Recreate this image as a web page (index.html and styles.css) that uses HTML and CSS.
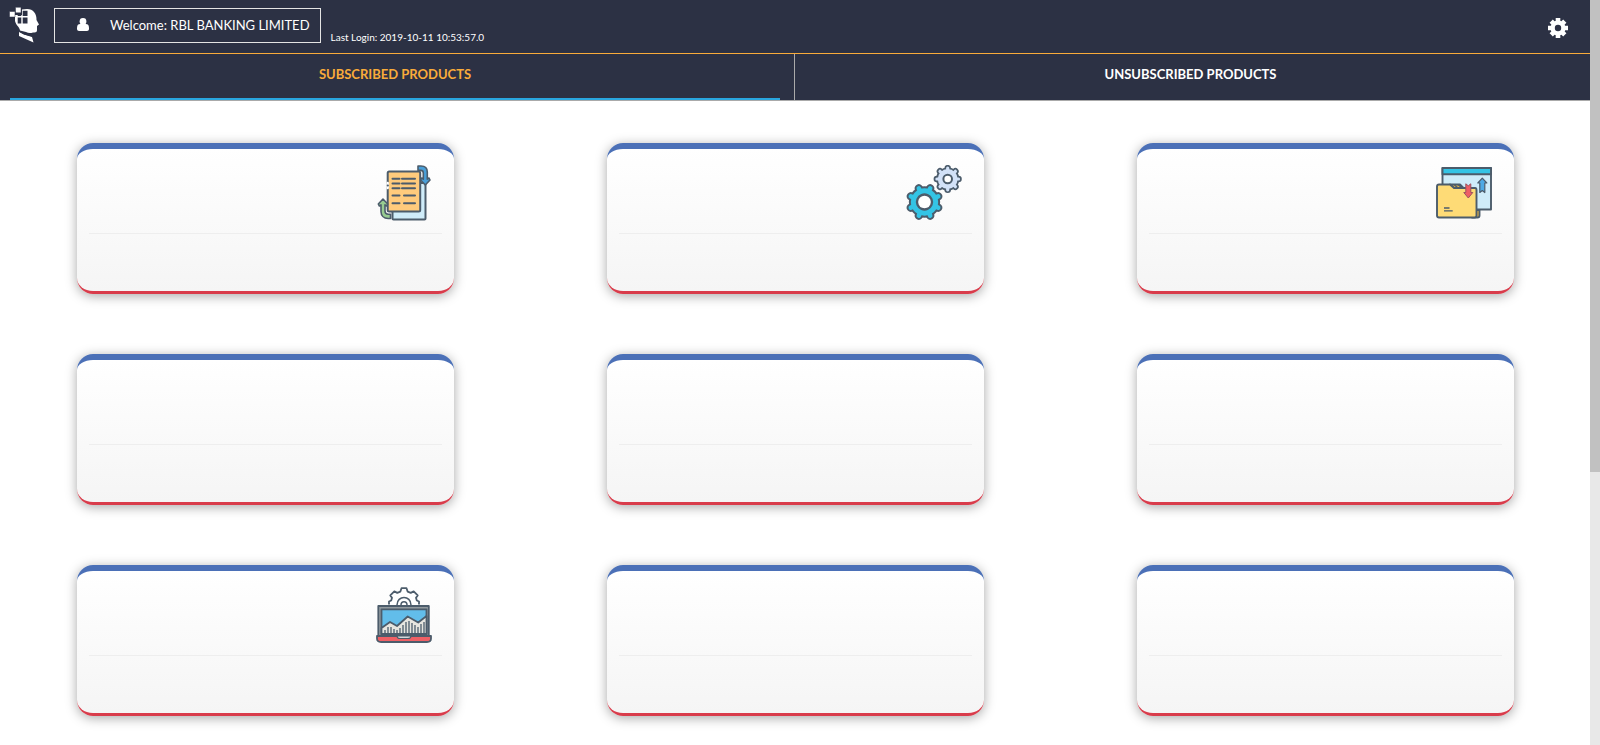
FILE: index.html
```html
<!DOCTYPE html>
<html lang="en">
<head>
<meta charset="utf-8">
<title>Subscribed Products</title>
<link rel="stylesheet" href="styles.css">
</head>
<body>
<div class="shell">
  <div class="page">
    <header class="topbar">
      <a class="logo" href="#" aria-label="Home">
        <svg width="30" height="36" viewBox="0 0 30 36" fill="#fff">
          <path d="M13 2.500c5-1 10-1 12 2.500 2 2 2.500 5 2.500 8l2.500 4.500-2 1.500v4c0 2.500-2 2.500-4 2.500-3 1-5 .500-7-.5l-6-1.500c0-3-4-5-5-9.500V8h7z"/>
          <path d="M10 24.500l5 3 8 2.500 1.500 5.500L10 29z"/>
          <path d="M8.700 6h3.600v3H8.700zM13.700 3.700h4.800V9h-4.800zM8.700 10.500h3.600v6H8.700zM13.700 10.500h4.800v6h-4.800z" fill="#2c3144"/>
          <path d="M.5 4.500h5.500v5.500H.5zM6.500.3h5.500v5.500H6.500z" stroke="#2c3144" stroke-width=".5"/>
          <path d="M10 24.500l5 2.500 8 2" fill="none" stroke="#2c3144" stroke-width="1"/>
        </svg>
      </a>
      <button class="welcome" type="button">
        <svg width="12" height="13" viewBox="0 0 12 13" fill="#fff"><path d="M3 6C0 6 0 9 0 11c0 1 1 2 2 2h8c1 0 2-1 2-2 0-2 0-5-3-5z"/><circle cx="6" cy="3.500" r="3.400"/></svg>
        <span>Welcome: RBL BANKING LIMITED</span>
      </button>
      <span class="last-login">Last Login: 2019-10-11 10:53:57.0</span>
      <button class="settings" type="button" aria-label="Settings">
        <svg width="20" height="20" viewBox="-10 -10 20 20">
          <g stroke="#fff" stroke-width="4.600"><path d="M0-10V10M-10 0H10M-6.800-6.800L6.800 6.800M6.800-6.800L-6.800 6.800"/></g>
          <circle r="7.500" fill="#fff"/><circle r="3.200" fill="#2c3144"/>
        </svg>
      </button>
    </header>
    <nav class="tabs">
      <a class="tab tab-active" href="#subscribed"><span>SUBSCRIBED PRODUCTS</span></a>
      <a class="tab" href="#unsubscribed"><span>UNSUBSCRIBED PRODUCTS</span></a>
    </nav>
    <main class="products">
      <section class="card"><div class="card-head">
        <svg class="icon" viewBox="0 0 56 56" fill="none" stroke="#4c5c6b" stroke-width="2" stroke-linejoin="round" stroke-linecap="round">
          <rect x="16.500" y="18" width="33" height="36.500" rx="1" fill="#cfecf9"/>
          <rect x="11.700" y="6.500" width="32.500" height="40" rx="1.500" fill="#ffcb7c"/>
          <path d="M11.700 18v5" stroke="#fff" stroke-width="2.400"/>
          <path d="M11.700 20.500h.2"/>
          <path d="M16.500 13.700h7M26 13.700h13M16.500 18.500h7M26 18.500h13M16.500 23.300h7M26 23.300h13M16.500 30.600h7M28 30.600h11M16.500 38.300h7M28 38.300h11"/>
          <path d="M42 1h3c4 0 6.300 2.300 6.300 6v7.200l1.700-1.200 1 2-4.700 5-4.700-5 1-2 1.700 1.200V8c0-2-.8-2.600-2.600-2.600H42z" fill="#4a9fd8" stroke-width="1.600"/>
          <path d="M14.500 53.500h-2.300c-4.500 0-7.200-3-7.200-7v-6.700L3.300 41l-1-2L7 34l4.700 5-1 2L9 39.800V46c0 2 1.200 3.200 3.200 3.200h2.300z" fill="#98cc91" stroke-width="1.600"/>
        </svg></div></section>
      <section class="card"><div class="card-head">
        <svg class="icon" viewBox="0 0 56 56">
          <g transform="translate(18.500 37) rotate(22.500)" stroke-linecap="round">
            <g stroke="#4c5c6b" stroke-width="8.400"><path d="M0-14.800V14.800M-14.800 0H14.800M-10.500-10.500L10.500 10.500M10.500-10.500L-10.500 10.500"/></g>
            <circle r="15.600" fill="#4c5c6b"/>
            <g stroke="#34c4e5" stroke-width="4.600"><path d="M0-14.800V14.800M-14.800 0H14.800M-10.500-10.500L10.500 10.500M10.500-10.500L-10.500 10.500"/></g>
            <circle r="13.600" fill="#34c4e5"/>
            <circle r="7.500" fill="#fff" stroke="#4c5c6b" stroke-width="2.400"/>
          </g>
          <g transform="translate(41.700 14)" stroke-linecap="round">
            <g stroke="#4c5c6b" stroke-width="6.600"><path d="M0-10.800V10.800M-10.800 0H10.800M-7.700-7.700L7.700 7.700M7.700-7.700L-7.700 7.700"/></g>
            <circle r="11.600" fill="#4c5c6b"/>
            <g stroke="#d2e1f7" stroke-width="3.200"><path d="M0-10.800V10.800M-10.800 0H10.800M-7.700-7.700L7.700 7.700M7.700-7.700L-7.700 7.700"/></g>
            <circle r="9.900" fill="#d2e1f7"/>
            <circle r="4.300" fill="#fff" stroke="#4c5c6b" stroke-width="2"/>
          </g>
        </svg></div></section>
      <section class="card"><div class="card-head">
        <svg class="icon" viewBox="0 0 56 56" fill="none" stroke="#4c5c6b" stroke-width="1.900" stroke-linejoin="round">
          <rect x="6.500" y="3" width="48.500" height="41.500" fill="#cfecf9"/>
          <path d="M6.500 3H55v6.300H6.500z" fill="#34c4e5"/>
          <path d="M38 45h5.500v5.500q0 2-2 2H36z" fill="#e3b54a"/>
          <path d="M14 19.500h10l3.500 3.500H18z" fill="#e3b54a"/>
          <path d="M3 19.500h11l4 3.500h21q1.500 0 1.500 2v25.500q0 2-2 2H3q-2 0-2-2V21.500q0-2 2-2z" fill="#fedb76"/>
          <path d="M18 19.500l4 3.500M22 19.500l4 3.500" stroke-width="1.400"/>
          <path d="M8 43h5.500M8 45.800h8.700" stroke-width="1.300"/>
          <path d="M29.800 18.800l2.500 2 2.500-2v8.700h2l-4.500 5.500-4.500-5.500h2z" fill="#ef5e65" stroke="#9b5360" stroke-width="1"/>
          <path d="M43.800 27.500l2.500-2 2.500 2V18h2l-4.500-4.800-4.500 4.800h2z" fill="#4da9e4" stroke-width="1.200"/>
        </svg></div></section>
      <section class="card"><div class="card-head"></div></section>
      <section class="card"><div class="card-head"></div></section>
      <section class="card"><div class="card-head"></div></section>
      <section class="card"><div class="card-head">
        <svg class="icon" viewBox="0 0 56 56" fill="none" stroke="#4c5c6b" stroke-width="1.800" stroke-linejoin="round">
          <path d="M13 17.500v-3l2.200-1 .8-2.700-1.700-2.400 4-4 3 1.500 3-1.200L25.500 1.200h5l1.200 3.500 3 1.200 3-1.500 4 4L40 10.800l.8 2.700 2.200 1v3" fill="#fff"/>
          <path d="M21 18c0-10 14-10 14 0M25 18c0-4.500 6-4.500 6 0" stroke-width="1.500"/>
          <rect x="2.300" y="19" width="50.500" height="30" fill="#929a9f"/>
          <rect x="5.500" y="22.300" width="45" height="25" fill="#62bdea"/>
          <path d="M5.500 41L14 35l7 4 10.700-9.500 10.500 6 8.300-6.500v18h-45z" fill="#e6e5df"/>
          <path d="M9 43v4M12 40v7M15 40v7M18 42v5M21 43v4M24 41v6M27 38v9M30 35v12M33 34v13M36 36v11M39 38v9M42 40v7M45 37v10M48 35v12" stroke-width="1.300"/>
          <path d="M1 49h54v2.500q0 3.500-4 3.500H5q-4 0-4-3.500z" fill="#ef6065"/>
          <path d="M21 49h14q0 2.500-3 2.500h-8q-3 0-3-2.500z" fill="#d5d8da" stroke-width="1.200"/>
        </svg></div></section>
      <section class="card"><div class="card-head"></div></section>
      <section class="card"><div class="card-head"></div></section>
    </main>
  </div>
  <div class="scroll-track"><div class="scroll-thumb"></div></div>
</div>
</body>
</html>
```
FILE: styles.css
```css
* { box-sizing: border-box; }
body {
  margin: 0;
  background: #fff;
  font-family: Lato, "Liberation Sans", sans-serif;
  font-size: 13px;
  color: #fff;
}
button { font: inherit; color: inherit; background: none; }
svg { display: block; }
.shell {
  display: grid;
  grid-template-columns: 1fr 10px;
  min-height: 100vh;
}
.topbar {
  display: flex;
  align-items: flex-start;
  height: 54px;
  padding: 7px 22px 0 9px;
  background: #2c3144;
  border-bottom: 1px solid #f9ab3a;
}
.logo { margin-right: 15px; }
.welcome {
  display: flex;
  align-items: center;
  gap: 21px;
  height: 35px;
  margin-top: 1px;
  padding: 0 10px 2px 22px;
  border: 1px solid #e4e4e4;
}
.last-login {
  margin: 22px 0 0 10px;
  font-size: 10px;
  line-height: 16px;
}
.settings {
  margin: 11px 0 0 auto;
  padding: 0;
  border: 0;
}
.tabs {
  display: grid;
  grid-template-columns: 1fr 1fr;
  height: 47px;
  background: #2c3144;
  border-bottom: 1px solid #aaa;
}
.tab {
  display: flex;
  padding: 0 14px 0 10px;
  color: #fff;
  font-weight: 700;
  line-height: 40px;
  text-align: center;
  text-decoration: none;
}
.tab span { flex: 1; }
.tab-active {
  color: #f9ab3a;
  border-right: 1px solid #aaa;
}
.tab-active span { border-bottom: 2px solid #29a6df; }
.products {
  display: grid;
  grid-template-columns: repeat(3, 1fr);
  gap: 60px 153px;
  padding: 42px 76px 29px 77px;
}
.card {
  height: 151px;
  padding: 0 12px;
  border-top: 6px solid #4b70b7;
  border-bottom: 3px solid #d93c4b;
  border-radius: 16px;
  background: linear-gradient(#fff, #f5f5f5);
  box-shadow: 0 2px 12px rgba(0, 0, 0, .35);
}
.card-head {
  display: flex;
  justify-content: flex-end;
  height: 85px;
  padding: 16px 10px 0 0;
  border-bottom: 1px solid #eee;
}
.icon { width: 56px; height: 56px; }
.scroll-track { background: #e8e8e8; }
.scroll-thumb { height: 63.4%; background: #c1c1c1; }
```
